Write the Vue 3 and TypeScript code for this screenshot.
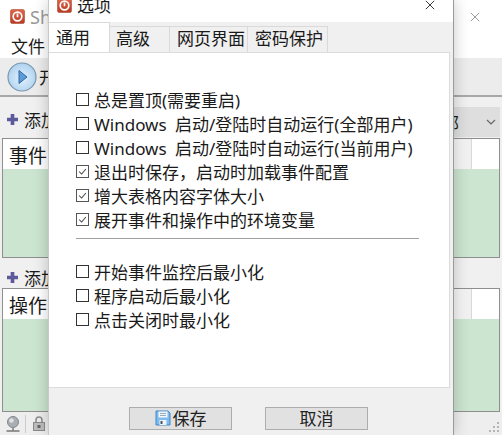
<template>
  <div class="main-window">
    <div class="main-title">
      <svg class="app-icon" viewBox="0 0 16 16"><use href="#app-logo" /></svg>
      <span class="main-title-text">ShortcutKey</span>
      <svg class="main-close" viewBox="0 0 12 12"><path d="M1 1l10 10M11 1L1 11" /></svg>
    </div>
    <div class="menu-bar"><span>文件</span></div>
    <div class="toolbar">
      <svg class="run-btn" viewBox="0 0 30 30">
        <defs>
          <radialGradient id="disc" cx="50%" cy="55%" r="60%">
            <stop offset="0" stop-color="#e3f1fc" />
            <stop offset="1" stop-color="#a9cfee" />
          </radialGradient>
        </defs>
        <circle cx="15" cy="15" r="14" fill="url(#disc)" stroke="#7b97ad" stroke-width="1.2" />
        <path d="M12 8.5L20 15l-8 6.5z" fill="#5b9bd8" stroke="#2f68a8" stroke-width="1" />
      </svg>
      <span>开始</span>
    </div>

    <section class="panel">
      <div class="panel-head">
        <svg class="plus" viewBox="0 0 12 12"><path d="M4 0h4v4h4v4H8v4H4V8H0V4h4z" /></svg>
        <span>添加事件</span>
        <div class="combo">
          <span class="combo-text">全部</span>
          <svg class="chevron" viewBox="0 0 10 6"><path d="M1 1l4 4 4-4" /></svg>
        </div>
      </div>
      <div class="grid-box grid-events">
        <div class="grid-header">
          <span class="col-main">事件</span>
          <span class="col-end"></span>
        </div>
      </div>
    </section>

    <section class="panel">
      <div class="panel-head panel-head-short">
        <svg class="plus" viewBox="0 0 12 12"><path d="M4 0h4v4h4v4H8v4H4V8H0V4h4z" /></svg>
        <span>添加操作</span>
      </div>
      <div class="grid-box grid-actions">
        <div class="grid-header">
          <span class="col-main">操作</span>
          <span class="col-end"></span>
        </div>
      </div>
    </section>

    <div class="status-bar">
      <svg class="status-icon" viewBox="0 0 14 16">
        <circle cx="7" cy="6" r="5.5" fill="#a9aeb2" stroke="#84888c" />
        <circle cx="5.5" cy="4.5" r="2.2" fill="#dfe2e4" />
        <path d="M7 12v2.5M0.5 15h13" stroke="#777" stroke-width="1.4" fill="none" />
      </svg>
      <i class="status-sep"></i>
      <svg class="status-icon lock" viewBox="0 0 12 15">
        <path d="M3 7V4a3 3 0 016 0v3" fill="none" stroke="#8e8e8e" stroke-width="1.6" />
        <rect x="0.5" y="6.5" width="11" height="8" fill="#bdbdbd" stroke="#8a8a8a" />
        <rect x="4.5" y="9" width="3" height="3" fill="#666" />
      </svg>
      <svg class="grip" viewBox="0 0 12 12"><path d="M9 1h2v2H9zM5 5h2v2H5zM9 5h2v2H9zM1 9h2v2H1zM5 9h2v2H5zM9 9h2v2H9z" /></svg>
    </div>

    <!-- options dialog floats over the main window -->
    <div class="dialog">
      <div class="dialog-title">
        <svg class="dialog-icon" viewBox="0 0 16 16"><use href="#app-logo" /></svg>
        <span>选项</span>
        <svg class="dialog-close" viewBox="0 0 12 12"><path d="M1 1l10 10M11 1L1 11" /></svg>
      </div>
      <div class="tabs">
        <span
          v-for="(tab, index) in tabs"
          :key="tab"
          class="tab"
          :class="{ active: index === 0 }"
        >{{ tab }}</span>
      </div>
      <div class="pane">
        <label v-for="item in topOptions" :key="item.text" class="option">
          <span class="check" :class="{ on: item.checked }">
            <svg v-if="item.checked" viewBox="0 0 13 13"><path d="M2.5 6.5l3 3 5-6" /></svg>
          </span>
          <span>{{ item.text }}</span>
        </label>
        <div class="divider"></div>
        <label v-for="item in bottomOptions" :key="item.text" class="option">
          <span class="check"></span>
          <span>{{ item.text }}</span>
        </label>
      </div>
      <div class="footer">
        <button class="btn">
          <svg class="floppy" viewBox="0 0 16 16">
            <path d="M1 1h12l2 2v12H1z" fill="#7ebbee" stroke="#3f86c6" />
            <rect x="3.5" y="1.5" width="9" height="6" fill="#f3f7fb" />
            <path d="M5 3.5h6M5 5.5h6" stroke="#9ab" />
            <rect x="4.5" y="10" width="7" height="5" fill="#eef3f7" />
            <rect x="5.5" y="11" width="2" height="3" fill="#456" />
          </svg>
          <span>保存</span>
        </button>
        <button class="btn"><span>取消</span></button>
      </div>
    </div>

    <svg class="sprite" width="0" height="0">
      <defs>
        <linearGradient id="logo-fill" x1="0" y1="0" x2="0" y2="1">
          <stop offset="0" stop-color="#e2674a" />
          <stop offset="1" stop-color="#b83a22" />
        </linearGradient>
        <symbol id="app-logo" viewBox="0 0 16 16">
          <rect x="0.5" y="0.5" width="15" height="15" rx="2" fill="url(#logo-fill)" stroke="#a5452f" stroke-width="0.6" />
          <circle cx="8" cy="8" r="4.6" fill="none" stroke="#fff" stroke-width="1.8" />
          <path d="M8 4.8v4" stroke="#fff" stroke-width="1.8" />
        </symbol>
      </defs>
    </svg>
  </div>
</template>

<script setup lang="ts">
interface OptionItem {
  text: string;
  checked: boolean;
}

const tabs: string[] = ['通用', '高级', '网页界面', '密码保护'];

const topOptions: OptionItem[] = [
  { text: '总是置顶(需要重启)', checked: false },
  { text: 'Windows 启动/登陆时自动运行(全部用户)', checked: false },
  { text: 'Windows 启动/登陆时自动运行(当前用户)', checked: false },
  { text: '退出时保存，启动时加载事件配置', checked: true },
  { text: '增大表格内容字体大小', checked: true },
  { text: '展开事件和操作中的环境变量', checked: true }
];

const bottomOptions: OptionItem[] = [
  { text: '开始事件监控后最小化', checked: false },
  { text: '程序启动后最小化', checked: false },
  { text: '点击关闭时最小化', checked: false }
];
</script>

<style>
html,
body {
  margin: 0;
  overflow: hidden;
  background: #f0f0f0;
}
</style>

<style scoped>
.main-window {
  position: relative;
  width: 502px;
  height: 435px;
  overflow: hidden;
  display: flex;
  flex-direction: column;
  font-family: "Noto Sans", "Noto Sans CJK SC", sans-serif;
  font-size: 17px;
  color: #1a1a1a;
}

.main-title {
  height: 33px;
  flex: none;
  display: flex;
  align-items: center;
  padding-left: 10px;
  background: #fff;
  box-sizing: border-box;
}

.app-icon {
  width: 15px;
  height: 15px;
}

.main-title-text {
  margin-left: 5px;
  color: #999;
  font-size: 18px;
}

.main-close {
  margin-left: auto;
  margin-right: 22px;
  width: 10px;
  height: 10px;
  fill: none;
  stroke: #888;
  stroke-width: 1;
}

.menu-bar {
  height: 25px;
  flex: none;
  background: #fff;
  padding-left: 11px;
  line-height: 27px;
  box-sizing: border-box;
}

.toolbar {
  height: 39px;
  flex: none;
  display: flex;
  align-items: center;
  gap: 2px;
  padding-left: 7px;
  box-sizing: border-box;
  border-bottom: 2px solid #a8a8a8;
  background: #ececec;
}

.run-btn {
  width: 30px;
  height: 30px;
}

.panel {
  flex: none;
  display: flex;
  flex-direction: column;
}

.panel-head {
  height: 41px;
  display: flex;
  align-items: center;
  padding: 4px 0 0 7px;
  gap: 6px;
  background: #f0f0f0;
  box-sizing: border-box;
}

.panel-head-short {
  height: 30px;
  padding-top: 9px;
}

.plus {
  width: 11px;
  height: 11px;
  fill: #5d5a9c;
}

.combo {
  align-self: flex-end;
  margin: 0 2px 1px auto;
  width: 200px;
  height: 30px;
  display: flex;
  align-items: center;
  justify-content: flex-end;
  gap: 27px;
  padding-right: 4px;
  box-sizing: border-box;
  background: #dedede;
  overflow: hidden;
}

.combo-text {
  white-space: nowrap;
}

.chevron {
  width: 10px;
  height: 6px;
  fill: none;
  stroke: #666;
  stroke-width: 1.2;
}

.grid-box {
  margin: 0 2px;
  border: 1px solid #8f8f8f;
  background: #cbe5d0;
  box-sizing: border-box;
}

.grid-events {
  height: 120px;
}

.grid-actions {
  height: 124px;
}

.grid-header {
  height: 30px;
  display: flex;
  background: #fff;
  font-size: 19px;
  line-height: 34px;
}

.col-main {
  padding-left: 6px;
  width: 469px;
  box-sizing: border-box;
  border-right: 1px solid #d9d9d9;
  background: linear-gradient(90deg, #fff 92%, #f0f0f0);
}

.col-end {
  flex: 1;
}

.status-bar {
  flex: 1;
  display: flex;
  align-items: center;
  gap: 5px;
  padding-left: 6px;
  background: #eee;
  position: relative;
}

.status-icon {
  width: 14px;
  height: 16px;
}

.status-icon.lock {
  width: 12px;
  height: 15px;
  margin-left: 2px;
}

.status-sep {
  width: 1px;
  height: 18px;
  background: #ccc;
}

.grip {
  position: absolute;
  right: 2px;
  bottom: 2px;
  width: 12px;
  height: 12px;
  fill: #b5b5b5;
}

.dialog {
  position: absolute;
  left: 48px;
  top: 0;
  width: 406px;
  height: 435px;
  display: flex;
  flex-direction: column;
  background: #f0f0f0;
  border-right: 1px solid #9a9a9a;
  border-left: 1px solid #c8c8c8;
  box-sizing: border-box;
  box-shadow: 0 0 14px rgba(0, 0, 0, 0.22);
}

.dialog-title {
  height: 22px;
  flex: none;
  display: flex;
  align-items: flex-end;
  background: #fff;
  padding-left: 8px;
  box-sizing: border-box;
  overflow: hidden;
  position: relative;
}

.dialog-icon {
  width: 15px;
  height: 15px;
  flex: none;
  margin-top: -3px;
  margin-bottom: 9px;
}

.dialog-title span {
  margin-left: 5px;
  line-height: 22px;
  margin-bottom: 5px;
}

.dialog-close {
  position: absolute;
  right: 18px;
  top: 0;
  width: 10px;
  height: 10px;
  fill: none;
  stroke: #111;
  stroke-width: 1;
}

.tabs {
  height: 30px;
  flex: none;
  display: flex;
  align-items: flex-end;
  margin-right: 3px;
  box-sizing: border-box;
}

.tab {
  height: 26px;
  line-height: 24px;
  box-sizing: border-box;
  background: #f0f0f0;
  border: 1px solid #d9d9d9;
  border-left: 0;
  border-bottom: 0;
  font-size: 17px;
}

.tab:nth-child(2) {
  width: 60px;
  padding-left: 6px;
}

.tab:nth-child(3) {
  width: 78px;
  padding-left: 7px;
}

.tab:nth-child(4) {
  width: 80px;
  padding-left: 7px;
}

.tab.active {
  height: 30px;
  width: 61px;
  line-height: 30px;
  padding-left: 7px;
  background: #fff;
}

.pane {
  flex: 1;
  margin-right: 3px;
  padding: 34px 30px 0 27px;
  background: #fff;
  border: 1px solid #dcdcdc;
  border-left: 0;
  box-sizing: border-box;
}

.option {
  display: flex;
  align-items: center;
  height: 24px;
  white-space: nowrap;
  font-size: 17px;
  word-spacing: 4px;
}

.check {
  width: 13px;
  height: 13px;
  flex: none;
  margin-right: 5px;
  border: 1px solid #333;
  box-sizing: border-box;
  background: #fff;
  display: flex;
}

.check.on {
  border-color: #555;
}

.check svg {
  width: 11px;
  height: 11px;
  fill: none;
  stroke: #444;
  stroke-width: 1.2;
}

.divider {
  height: 1px;
  margin: 7px 0 20px;
  background: #a0a0a0;
}

.footer {
  height: 47px;
  flex: none;
  display: flex;
  gap: 33px;
  padding: 19px 0 0 80px;
  box-sizing: border-box;
}

.btn {
  width: 103px;
  height: 23px;
  padding: 0 0 2px;
  display: flex;
  align-items: center;
  justify-content: center;
  gap: 2px;
  font: inherit;
  font-size: 17px;
  color: #222;
  background: #e1e1e1;
  border: 1px solid #adadad;
  box-sizing: border-box;
}

.floppy {
  width: 16px;
  height: 16px;
}

.sprite {
  position: absolute;
}
</style>
